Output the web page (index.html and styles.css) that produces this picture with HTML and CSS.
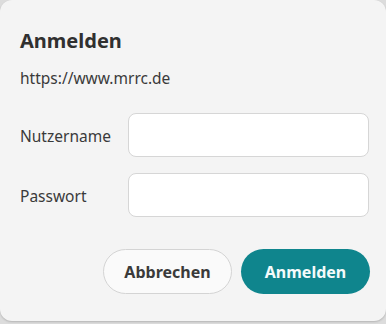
FILE: index.html
```html
<!DOCTYPE html>
<html lang="de">
<head>
<meta charset="utf-8">
<link rel="stylesheet" href="styles.css">
</head>
<body>
<div class="dialog">
  <h1 class="title">Anmelden</h1>
  <div class="url">https://www.mrrc.de</div>
  <div class="form">
    <label class="label" for="u">Nutzername</label>
    <input class="field" id="u" type="text">
    <label class="label" for="p">Passwort</label>
    <input class="field" id="p" type="password">
  </div>
  <div class="actions">
    <button class="btn btn-cancel">Abbrechen</button>
    <button class="btn btn-ok">Anmelden</button>
  </div>
</div>
</body>
</html>
```
FILE: styles.css
```css
html, body {
  margin: 0;
  padding: 0;
  background: #dcdcdc;
  width: 386px;
  height: 324px;
  overflow: hidden;
}
.dialog {
  box-sizing: border-box;
  width: 386px;
  height: 321px;
  background: #f4f4f4;
  border-radius: 12px;
  box-shadow: 0 1px 2px rgba(0,0,0,0.18);
  padding: 28px 16px 0 20px;
  font-family: "Noto Sans", "DejaVu Sans", sans-serif;
  color: #3a3a3a;
}
.title {
  margin: 0;
  font-size: 20px;
  font-weight: 700;
  line-height: 26px;
  color: #303030;
}
.url {
  margin-top: 13px;
  font-size: 15.5px;
  line-height: 22px;
}
.form {
  margin-top: 24px;
  display: grid;
  grid-template-columns: 108px 241px;
  row-gap: 16px;
  align-items: center;
}
.label {
  font-size: 15.5px;
  padding-top: 2px;
}
.field {
  box-sizing: border-box;
  height: 44px;
  width: 241px;
  margin: 0;
  background: #ffffff;
  border: 1px solid #d6d6d6;
  border-radius: 8px;
  outline: none;
}
.actions {
  margin-top: 32px;
  display: flex;
  justify-content: flex-end;
  gap: 9px;
}
.btn {
  box-sizing: border-box;
  height: 45px;
  width: 129px;
  border-radius: 23px;
  font-family: "Noto Sans", "DejaVu Sans", sans-serif;
  font-size: 16px;
  font-weight: 700;
  cursor: pointer;
}
.btn-cancel {
  background: #fafafa;
  border: 1px solid #d4d4d4;
  color: #3a3a3a;
}
.btn-ok {
  background: #0f858d;
  border: none;
  color: #f4fbfb;
}
```
